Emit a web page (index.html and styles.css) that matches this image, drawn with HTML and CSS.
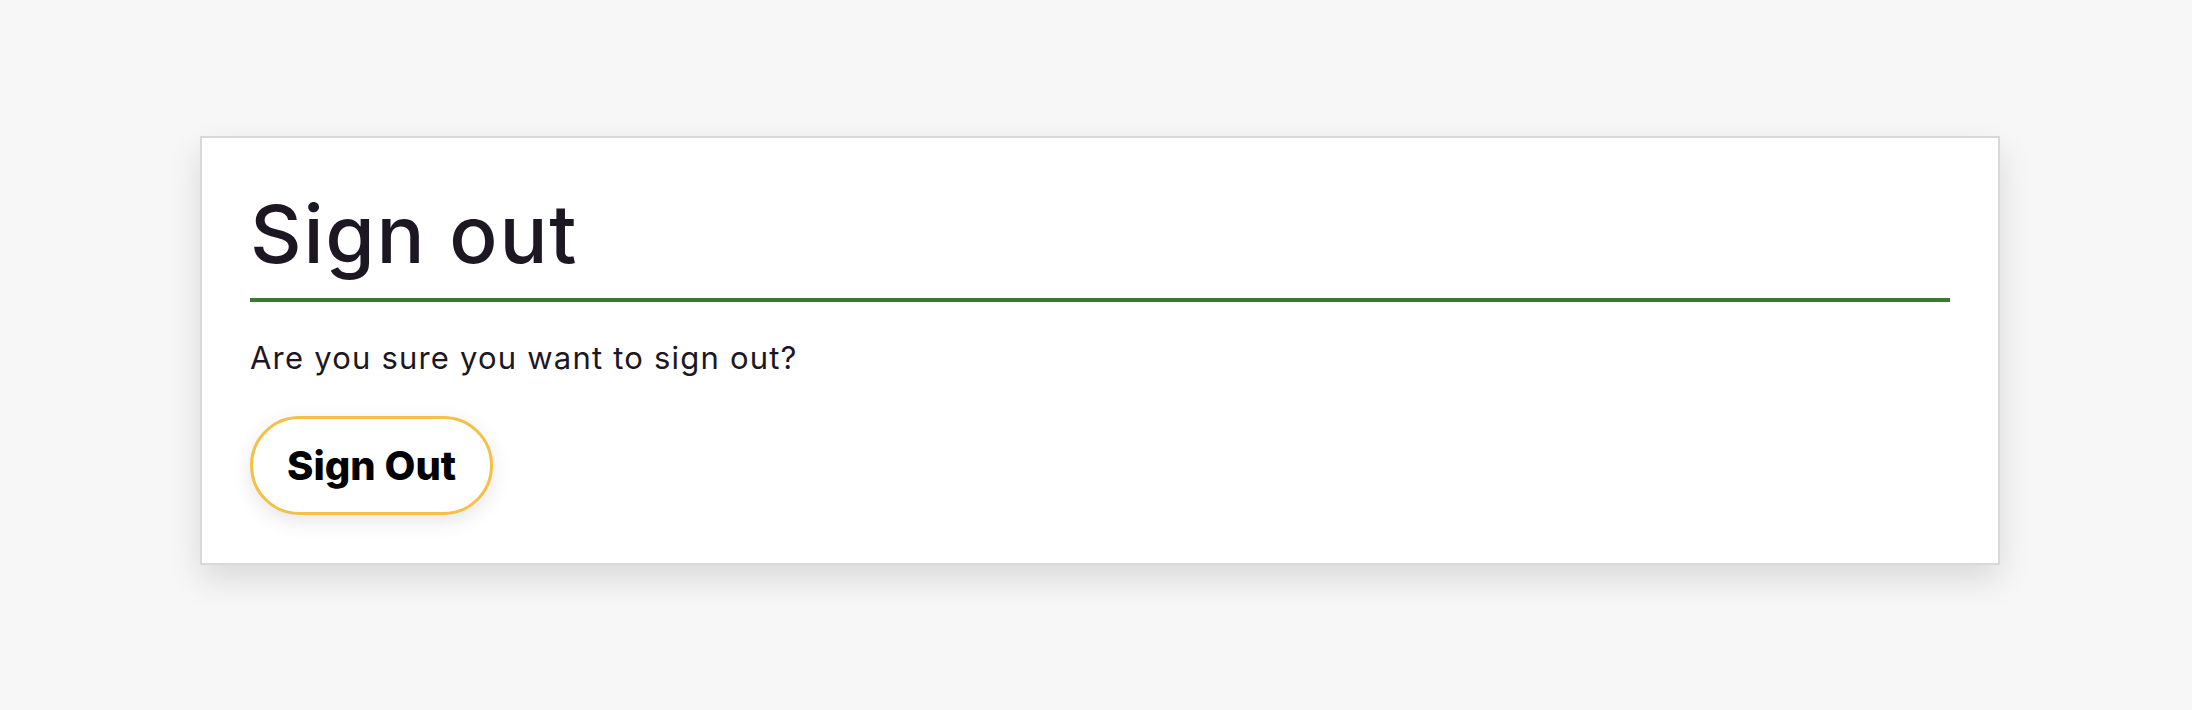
FILE: index.html
```html
<!DOCTYPE html>
<html lang="en">
<head>
<meta charset="utf-8">
<title>Sign out</title>
<link rel="stylesheet" href="styles.css">
</head>
<body>
<main class="page">
  <section class="card">
    <h1 class="title">Sign out</h1>
    <p class="message">Are you sure you want to sign out?</p>
    <button class="btn" type="button">Sign Out</button>
  </section>
</main>
</body>
</html>
```

FILE: styles.css
```css
html, body {
  margin: 0;
  padding: 0;
  background: #f7f7f7;
  font-family: "Inter", "Noto Sans", sans-serif;
  color: #1d1724;
}

.page {
  padding: 136px 0 0 200px;
  height: 574px;
}

.card {
  box-sizing: border-box;
  width: 1800px;
  background: #ffffff;
  border: 2px solid #d9d9d9;
  box-shadow: 0 14px 32px rgba(0, 0, 0, 0.12);
  padding: 48px;
  display: flex;
  flex-direction: column;
  align-items: flex-start;
}

.title {
  align-self: stretch;
  margin: 0;
  font-size: 80px;
  font-weight: 500;
  line-height: 96px;
  letter-spacing: 1.7px;
  padding-bottom: 16px;
  border-bottom: 4px solid #367c2b;
  color: #1d1724;
}

.message {
  margin: 35px 0 0;
  font-size: 31px;
  line-height: 42px;
  letter-spacing: 1.2px;
  color: #1d1724;
}

.btn {
  margin-top: 37px;
  height: 99px;
  padding: 0 34px;
  border: 3px solid #f4c045;
  border-radius: 50px;
  background: #ffffff;
  box-shadow: 0 6px 20px rgba(0, 0, 0, 0.1);
  font-family: "Inter", "Noto Sans", sans-serif;
  font-weight: 800;
  font-size: 40px;
  color: #000000;
  cursor: pointer;
}
```
